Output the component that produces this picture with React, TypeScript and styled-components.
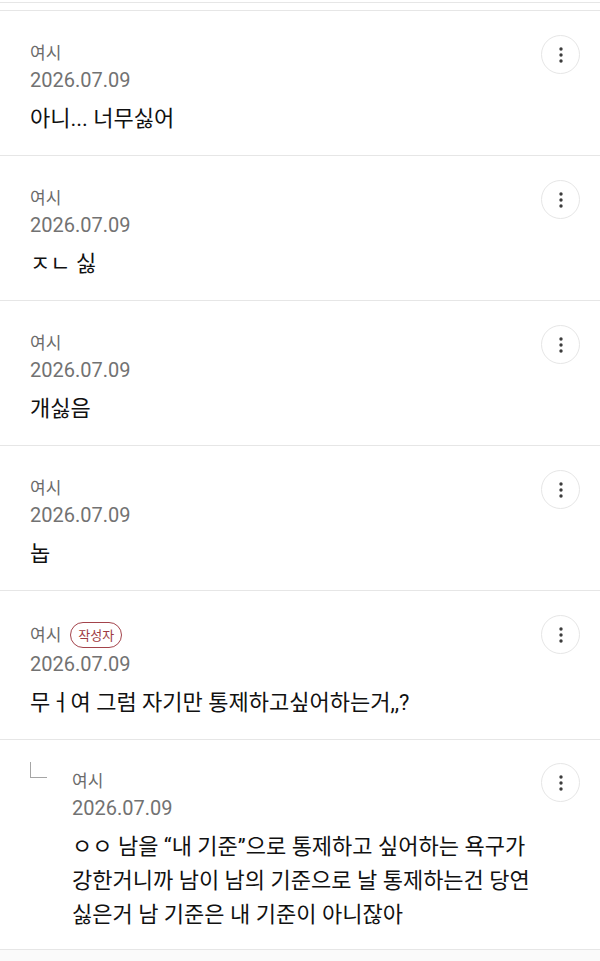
import React from 'react';
import styled, { createGlobalStyle } from 'styled-components';

const GlobalStyle = createGlobalStyle`
  html, body {
    margin: 0;
    padding: 0;
    background: #ffffff;
  }
  body {
    font-family: Roboto, 'Noto Sans CJK KR', sans-serif;
    -webkit-font-smoothing: antialiased;
  }
`;

const Page = styled.div`
  width: 600px;
  min-height: 961px;
  display: flex;
  flex-direction: column;
  background: #ffffff;
`;

const TopEdge = styled.div`
  height: 2px;
  border-bottom: 1px solid #e6e6e6;
  margin-bottom: 7px;
`;

const List = styled.ul`
  margin: 0;
  padding: 0;
  list-style: none;
  border-top: 1px solid #e6e6e6;
`;

const Item = styled.li<{ $reply?: boolean }>`
  display: flex;
  flex-direction: row;
  align-items: flex-start;
  padding: ${(p) => (p.$reply ? '28px 20px 17px 30px' : '29px 20px 21px 30px')};
  border-bottom: 1px solid #e6e6e6;
`;

const ReplyMark = styled.span`
  flex: none;
  width: 16px;
  height: 15px;
  margin-top: -6px;
  margin-right: 25px;
  border-left: 1.5px solid #a5a5a5;
  border-bottom: 1.5px solid #a5a5a5;
`;

const Body = styled.div`
  flex: 1;
  min-width: 0;
  display: flex;
  flex-direction: column;
`;

const NameRow = styled.div<{ $tall?: boolean }>`
  display: flex;
  align-items: center;
  gap: 9px;
  height: ${(p) => (p.$tall ? '30px' : '26px')};
`;

const Name = styled.span`
  font-size: 17px;
  line-height: 26px;
  color: #6b6b6b;
`;

const AuthorBadge = styled.span`
  box-sizing: border-box;
  display: inline-flex;
  align-items: center;
  justify-content: center;
  height: 26px;
  padding: 0 7px;
  border: 1.5px solid #a3434b;
  border-radius: 13px;
  font-size: 13px;
  color: #9e3a42;
  line-height: 1;
`;

const DateText = styled.span`
  font-size: 20px;
  line-height: 28px;
  color: #727272;
`;

const Content = styled.p<{ $reply?: boolean }>`
  margin: ${(p) => (p.$reply ? '8px 0 0' : '10px 0 0')};
  font-size: 22px;
  line-height: ${(p) => (p.$reply ? '34px' : '30px')};
  color: #111111;
  white-space: pre;
`;

const MoreButton = styled.button`
  flex: none;
  box-sizing: border-box;
  width: 39px;
  height: 39px;
  margin-top: -5px;
  padding: 0;
  border: 1px solid #e6e6e6;
  border-radius: 50%;
  background: #ffffff;
  display: flex;
  align-items: center;
  justify-content: center;
  cursor: pointer;
`;

const Rest = styled.div`
  flex: 1;
  background: #fafafa;
`;

function Dots() {
  return (
    <svg width="4" height="16" viewBox="0 0 4 16">
      <circle cx="2" cy="2" r="1.7" fill="#3c3c3c" />
      <circle cx="2" cy="8" r="1.7" fill="#3c3c3c" />
      <circle cx="2" cy="14" r="1.7" fill="#3c3c3c" />
    </svg>
  );
}

type Comment = {
  name: string;
  date: string;
  text: string;
  author?: boolean;
  reply?: boolean;
};

const comments: Comment[] = [
  { name: '여시', date: '2026.07.09', text: '아니... 너무싫어' },
  { name: '여시', date: '2026.07.09', text: 'ㅈㄴ 싫' },
  { name: '여시', date: '2026.07.09', text: '개싫음' },
  { name: '여시', date: '2026.07.09', text: '놉' },
  { name: '여시', date: '2026.07.09', text: '무ㅓ여 그럼 자기만 통제하고싶어하는거,,?', author: true },
  {
    name: '여시',
    date: '2026.07.09',
    reply: true,
    text: 'ㅇㅇ 남을 “내 기준”으로 통제하고 싶어하는 욕구가\n강한거니까 남이 남의 기준으로 날 통제하는건 당연\n싫은거 남 기준은 내 기준이 아니잖아',
  },
];

export default function App() {
  return (
    <>
      <GlobalStyle />
      <Page>
        <TopEdge />
        <List>
          {comments.map((c, i) => (
            <Item key={i} $reply={c.reply}>
              {c.reply && <ReplyMark />}
              <Body>
                <NameRow $tall={c.author}>
                  <Name>{c.name}</Name>
                  {c.author && <AuthorBadge>작성자</AuthorBadge>}
                </NameRow>
                <DateText>{c.date}</DateText>
                <Content $reply={c.reply}>{c.text}</Content>
              </Body>
              <MoreButton aria-label="더보기">
                <Dots />
              </MoreButton>
            </Item>
          ))}
        </List>
        <Rest />
      </Page>
    </>
  );
}
